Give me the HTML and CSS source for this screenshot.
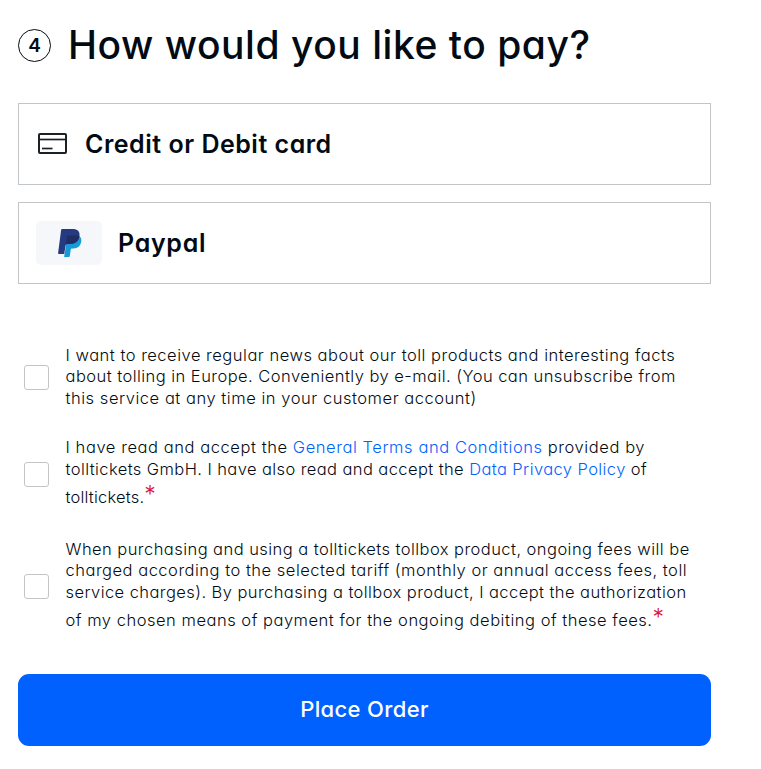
FILE: index.html
```html
<!DOCTYPE html>
<html lang="en">
<head>
    <meta charset="UTF-8">
    <meta name="viewport" content="width=device-width, initial-scale=1.0">
    <title>Payment</title>
    <link rel="stylesheet" href="styles.css">
</head>
<body>
    <div class="main">
        <div class="heading">
            <span class="step">4</span>
            <h1>How would you like to pay?</h1>
        </div>

        <div class="method">
            <svg class="card-icon" width="29" height="21" viewBox="0 0 29 21" fill="none" stroke="#1b2124">
                <rect x="1" y="1" width="27" height="19" rx="1" stroke-width="2"/>
                <path d="M1 6.500h27" stroke-width="1.700"/>
                <path d="M4 15.500h10.500" stroke-width="1.700"/>
            </svg>
            <span class="method-name">Credit or Debit card</span>
        </div>
        <div class="method">
            <div class="paypal-icon">
                <svg width="24" height="28" viewBox="0 0 24 28">
                    <path fill="#179bd7" d="M21.400 7.300C23.500 8.700 23.700 11.200 22.900 14C22 17.600 19.500 19.400 15.600 19.400H13.800C13.200 19.400 12.900 19.700 12.800 20.300L11.800 27C11.700 27.600 11.400 28 10.700 28H6.100L8.500 13Z"/>
                    <path fill="#253b80" d="M4.100 0H14.200C19.800 0 22.400 2.600 21.400 7.300C20.400 12.500 17.300 14.900 12 14.900H9.400C8.300 14.900 7.800 15.500 7.600 16.500L6.200 25H.8C.3 25 0 24.600.1 24.100L3.100.9C3.200.3 3.500 0 4.100 0Z"/>
                    <path fill="#222d65" d="M10.300 6.400H19.500C20.300 6.600 20.900 6.900 21.400 7.300C20.400 12.500 17.300 14.900 12 14.900H9.400C8.500 14.900 8 15.200 7.700 15.900L9 7.500C9.100 6.800 9.500 6.400 10.300 6.400Z"/>
                </svg>
            </div>
            <span class="method-name paypal">Paypal</span>
        </div>

        <div class="terms">
            <label class="term">
                <input type="checkbox">
                <span class="text">
                    <span class="line l1">I want to receive regular news about our toll products and interesting facts</span>
                    <span class="line l2">about tolling in Europe. Conveniently by e-mail. (You can unsubscribe from</span>
                    <span class="line l3">this service at any time in your customer account)</span>
                </span>
            </label>
            <label class="term">
                <input type="checkbox">
                <span class="text">
                    <span class="line l4">I have read and accept the <a href="#">General Terms and Conditions</a> provided by</span>
                    <span class="line l5">tolltickets GmbH. I have also read and accept the <a href="#">Data Privacy Policy</a> of</span>
                    <span class="line last l6">tolltickets.<sup>*</sup></span>
                </span>
            </label>
            <label class="term">
                <input type="checkbox">
                <span class="text">
                    <span class="line l7">When purchasing and using a tolltickets tollbox product, ongoing fees will be</span>
                    <span class="line l8">charged according to the selected tariff (monthly or annual access fees, toll</span>
                    <span class="line l9">service charges). By purchasing a tollbox product, I accept the authorization</span>
                    <span class="line last l10">of my chosen means of payment for the ongoing debiting of these fees.<sup>*</sup></span>
                </span>
            </label>
        </div>

        <button class="order">Place Order</button>
    </div>
</body>
</html>
```
FILE: styles.css
```css
*{
    box-sizing: border-box;
}
body{
    margin: 0;
    background-color: #fff;
    color: #020b13;
    font-family: Inter, "Open Sans", sans-serif;
    font-feature-settings: "cv11";
}
.main{
    width: 693px;
    margin-left: 18px;
    padding-top: 15px;
}
.heading{
    display: flex;
    align-items: center;
    height: 61px;
    margin-bottom: 27px;
}
.step{
    display: flex;
    align-items: center;
    justify-content: center;
    width: 33px;
    height: 33px;
    border: 1px solid #020b13;
    border-radius: 50%;
    font-size: 19px;
    font-weight: 600;
}
h1{
    margin: 0 0 0 17px;
    padding-bottom: 3px;
    font-size: 39px;
    font-weight: 500;
    letter-spacing: 0.53px;
    white-space: nowrap;
}
.method{
    display: flex;
    align-items: center;
    height: 82px;
    margin-bottom: 17px;
    padding-left: 17px;
    border: 1px solid #c2c5c8;
}
.card-icon{
    margin-left: 2px;
    margin-right: 18px;
    margin-bottom: 1px;
}
.method-name{
    padding-bottom: 1px;
    font-size: 25px;
    font-weight: 600;
    letter-spacing: 0.51px;
    white-space: nowrap;
}
.paypal-icon{
    display: flex;
    align-items: center;
    justify-content: center;
    width: 66px;
    height: 44px;
    margin-right: 16px;
    padding-left: 1px;
    background-color: #f5f7fa;
    border-radius: 5px;
}
.paypal{
    letter-spacing: 0.7px;
}
.terms{
    display: flex;
    flex-direction: column;
    gap: 28px;
    padding: 44px 0 39.8px 6px;
}
.term{
    display: flex;
    align-items: center;
    gap: 16.5px;
}
.term input{
    appearance: none;
    flex: none;
    width: 25px;
    height: 25px;
    margin: 0;
    border: 1px solid #c2c5c8;
    border-radius: 3px;
    background-color: #fff;
}
.line{
    display: block;
    height: 21.4px;
    line-height: 21.4px;
    font-size: 16.5px;
    font-weight: 300;
    white-space: nowrap;
}
.last{
    height: 31px;
    padding-top: 7px;
}
.l1{ letter-spacing: 0.51px; }
.l2{ letter-spacing: 0.46px; }
.l3{ letter-spacing: 0.54px; }
.l4{ letter-spacing: 0.57px; }
.l5{ letter-spacing: 0.41px; }
.l6{ letter-spacing: 0.2px; }
.l7{ letter-spacing: 0.45px; }
.l8{ letter-spacing: 0.51px; }
.l9{ letter-spacing: 0.43px; }
.l10{ letter-spacing: 0.52px; }
.line a{
    color: #0061ff;
    text-decoration: none;
}
sup{
    color: #dc143c;
    font-size: 23px;
    line-height: 0;
    vertical-align: 1px;
}
.order{
    display: block;
    width: 100%;
    height: 72px;
    padding-bottom: 3px;
    border: none;
    border-radius: 11px;
    background-color: #0061ff;
    color: #fff;
    font-family: inherit;
    font-feature-settings: inherit;
    font-size: 22px;
    font-weight: 500;
    letter-spacing: 0.36px;
}
```
